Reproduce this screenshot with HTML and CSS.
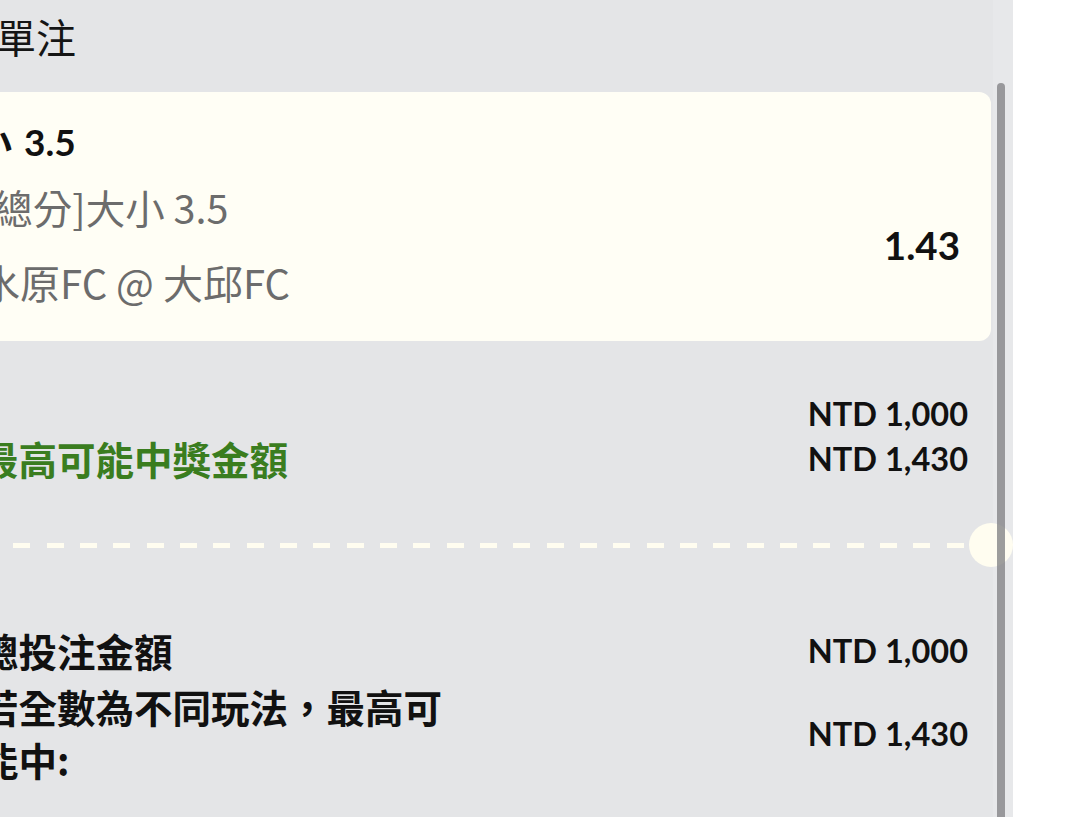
FILE: index.html
```html
<!DOCTYPE html>
<html lang="zh-Hant">
<head>
<meta charset="utf-8">
<title>單注</title>
<link rel="stylesheet" href="styles.css">
</head>
<body>
<div class="screen">
  <section class="panel">
    <div class="content">
      <h1 class="title">單注</h1>
      <div class="card">
        <div class="sel">小 3.5</div>
        <div class="card-row">
          <div class="card-info">
            <div class="market">[總分]大小 3.5</div>
            <div class="match">水原FC @ 大邱FC</div>
          </div>
          <div class="odds">1.43</div>
        </div>
      </div>
      <div class="stake">
        <div class="row">
          <span class="label"></span>
          <span class="amount">NTD 1,000</span>
        </div>
        <div class="row">
          <span class="label green">最高可能中獎金額</span>
          <span class="amount">NTD 1,430</span>
        </div>
      </div>
      <div class="divider">
        <span class="dash"></span>
        <span class="notch"></span>
      </div>
      <div class="summary">
        <div class="row">
          <span class="label strong">總投注金額</span>
          <span class="amount">NTD 1,000</span>
        </div>
        <div class="row">
          <span class="label strong multi">若全數為不同玩法，最高可<br>能中:</span>
          <span class="amount">NTD 1,430</span>
        </div>
      </div>
    </div>
    <div class="track"><div class="thumb"></div></div>
  </section>
</div>
</body>
</html>
```

FILE: styles.css
```css
html, body {
  margin: 0;
  padding: 0;
  background: #ffffff;
}

body {
  font-family: Lato, "Noto Sans CJK TC", sans-serif;
  color: #111111;
}

.screen {
  width: 1080px;
  height: 817px;
  overflow: hidden;
  display: flex;
}

.panel {
  position: relative;
  width: 1013px;
  height: 817px;
  background: #e4e5e7;
  overflow: hidden;
  flex: none;
}

.content {
  margin-left: -60px;
  width: 1051px;
  padding-top: 8px;
}

.title {
  margin: 0;
  padding-left: 56px;
  font-family: "Noto Sans CJK TC", sans-serif;
  font-weight: 400;
  font-size: 40px;
  line-height: 56px;
  color: #151515;
}

.card {
  margin-top: 28px;
  background: #fffef5;
  border-radius: 12px;
  padding: 28px 31px 33px 40px;
}

.sel {
  margin-left: -5px;
  font-weight: 700;
  font-size: 37px;
  line-height: 44px;
  color: #111111;
  word-spacing: 3px;
}

.card-row {
  display: flex;
  align-items: center;
  justify-content: space-between;
  margin-top: 17px;
}

.card-info {
  display: flex;
  flex-direction: column;
  gap: 23px;
}

.market,
.match {
  font-family: "Noto Sans CJK TC", sans-serif;
  font-size: 40px;
  line-height: 52px;
  color: #6c6c6c;
}

.market {
  font-size: 39.5px;
}

.odds {
  font-weight: 700;
  font-size: 38.5px;
  line-height: 44px;
  color: #111111;
}

.stake {
  margin-top: 50px;
  padding: 0 23px 0 40px;
}

.row {
  display: flex;
  align-items: center;
  justify-content: space-between;
}

.stake .row {
  height: 45px;
}

.label {
  font-family: "Noto Sans CJK TC", sans-serif;
  font-size: 38.5px;
  font-weight: 700;
  line-height: 45px;
}

.green {
  color: #3a7d1f;
}

.amount {
  font-weight: 700;
  font-size: 32.5px;
  line-height: 45px;
  color: #111111;
}

.divider {
  position: relative;
  margin-top: 42px;
  height: 44px;
  display: flex;
  align-items: center;
  padding-left: 40px;
}

.dash {
  display: block;
  width: 988px;
  height: 5px;
  background: repeating-linear-gradient(to right, #fffdf0 0 17px, transparent 17px 33.33px);
}

.notch {
  position: absolute;
  right: -22px;
  top: 0;
  width: 44px;
  height: 44px;
  border-radius: 50%;
  background: #fffdf0;
}

.summary {
  margin-top: 57px;
  padding: 0 23px 0 40px;
}

.summary .label {
  color: #111111;
  font-size: 38.5px;
  line-height: 53px;
}

.summary .row + .row {
  margin-top: 3px;
}

.track {
  position: absolute;
  top: 0;
  right: 0;
  width: 20px;
  height: 817px;
  background: rgba(255, 255, 255, 0.12);
}

.thumb {
  margin-top: 83px;
  margin-left: 4px;
  width: 8px;
  height: 760px;
  border-radius: 4px;
  background: rgba(130, 130, 132, 0.78);
}
```
